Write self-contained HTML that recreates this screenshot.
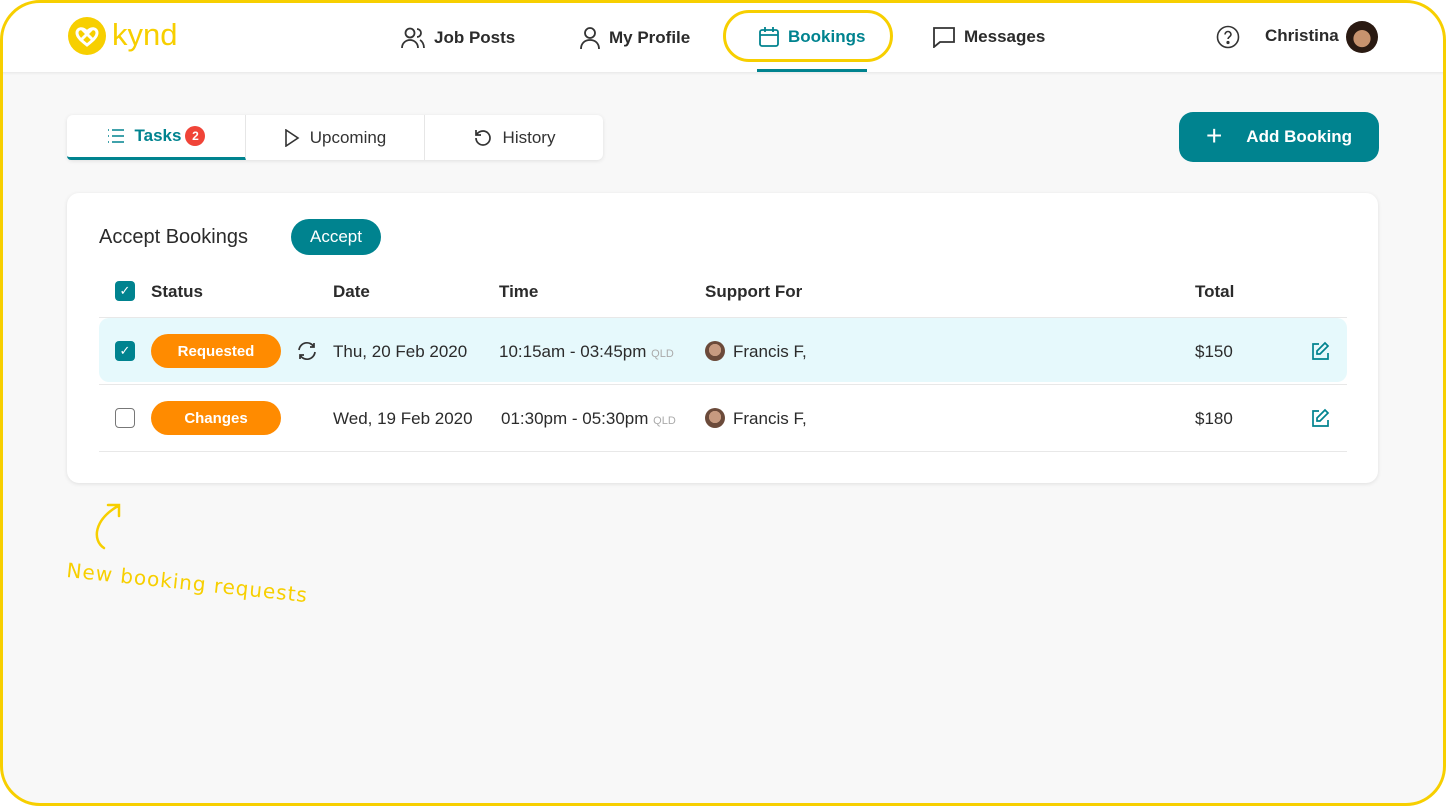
<!DOCTYPE html>
<html><head><meta charset="utf-8"><style>
*{box-sizing:border-box;margin:0;padding:0}
body{width:1446px;height:806px;overflow:hidden;background:#f8f8f8;font-family:"Liberation Sans",sans-serif;color:#2b2b2b;position:relative}
.frame{position:absolute;left:0;top:0;width:1446px;height:806px;border:3px solid #f7cf00;border-radius:40px;z-index:10;box-shadow:0 0 0 30px #fff}
.clip{position:absolute;left:0;top:0;width:1446px;height:806px;overflow:hidden}
.hdr{position:absolute;left:0;top:0;right:0;height:72px;background:#fff;box-shadow:0 1px 3px rgba(0,0,0,.08)}
.abs{position:absolute}
.nav{position:absolute;top:26px;font-size:17px;font-weight:bold;color:#2b2b2b;display:flex;align-items:center;gap:8px}
.tabs{position:absolute;left:67px;top:115px;width:536px;height:45px;background:#fff;border-radius:6px;box-shadow:0 1px 4px rgba(0,0,0,.1);display:flex}
.tab{flex:1;display:flex;align-items:center;justify-content:center;gap:10px;font-size:17px;color:#333;border-right:1px solid #e6e6e6}
.card{position:absolute;left:67px;top:193px;width:1311px;height:290px;background:#fff;border-radius:12px;box-shadow:0 1px 4px rgba(0,0,0,.1)}
.pill{position:absolute;width:130px;height:34px;border-radius:17px;background:#ff8b00;color:#fff;font-weight:bold;font-size:15px;display:flex;align-items:center;justify-content:center}
.cb{position:absolute;width:20px;height:20px;border-radius:4px}
.t{position:absolute;font-size:17px}
.th{position:absolute;font-size:17px;font-weight:bold;top:89px}
</style></head><body><div class="clip">
<div class="hdr">
 <svg class="abs" style="left:67px;top:16px" width="40" height="40" viewBox="0 0 40 40"><circle cx="20" cy="20" r="19" fill="#f7cf00"/><path d="M10 17c0-5 6-6 10-1 4-5 10-4 10 1 0 4-5 8-10 12-5-4-10-8-10-12zM13 25l12-12M15 13l12 12" stroke="#fff" stroke-width="3" fill="none"/></svg>
 <div class="abs" style="left:112px;top:17px;font-size:31px;color:#f7cf00;letter-spacing:0px">kynd</div>
 <div class="nav" style="left:400px"><svg width="26" height="24" viewBox="0 0 26 24" fill="none" stroke="#333" stroke-width="1.8"><circle cx="10" cy="7" r="4.5"/><path d="M2 22c0-5 4-8 8-8s8 3 8 8M17 3a4 4 0 010 8M20 14c2 1 4 4 4 8"/></svg>Job Posts</div>
 <div class="nav" style="left:579px"><svg width="22" height="24" viewBox="0 0 22 24" fill="none" stroke="#333" stroke-width="1.8"><circle cx="11" cy="7" r="5"/><path d="M2 23c0-6 4-9 9-9s9 3 9 9"/></svg>My Profile</div>
 <div class="abs" style="left:723px;top:10px;width:170px;height:52px;border:3px solid #f7cf00;border-radius:27px"></div>
 <div class="nav" style="left:758px;color:#00838f"><svg width="22" height="22" viewBox="0 0 22 22" fill="none" stroke="#00838f" stroke-width="1.8"><rect x="2" y="4" width="18" height="16" rx="2"/><path d="M2 9h18M7 1v5M15 1v5"/></svg>Bookings</div>
 <div class="abs" style="left:757px;top:69px;width:110px;height:3px;background:#00838f"></div>
 <div class="nav" style="left:932px"><svg width="24" height="22" viewBox="0 0 24 22" fill="none" stroke="#333" stroke-width="1.8"><path d="M2 2h20v14H8l-6 5z"/></svg>Messages</div>
 <svg class="abs" style="left:1216px;top:25px" width="24" height="24" viewBox="0 0 24 24" fill="none" stroke="#333" stroke-width="1.6"><circle cx="12" cy="12" r="10.5"/><path d="M9 9.5a3 3 0 116 0c0 2-3 2.5-3 4.5"/><circle cx="12" cy="17.5" r=".8" fill="#333"/></svg>
 <div class="nav" style="left:1265px">Christina</div>
 <div class="abs" style="left:1346px;top:21px;width:32px;height:32px;border-radius:50%;background:radial-gradient(circle at 50% 55%,#c8936e 0 35%,#2a1a12 37%)"></div>
</div>
<div class="tabs">
 <div class="tab" style="color:#00838f;font-weight:bold;border-bottom:3px solid #00838f;border-radius:0 0 0 4px"><svg width="18" height="14" viewBox="0 0 18 14" stroke="#00838f" stroke-width="1.6"><path d="M1 1h1M1 7h1M1 13h1M5 1h12M5 7h12M5 13h12"/></svg>Tasks <span style="margin-left:-6px;width:20px;height:20px;border-radius:50%;background:#f04438;color:#fff;font-size:12px;display:flex;align-items:center;justify-content:center">2</span></div>
 <div class="tab"><svg width="16" height="18" viewBox="0 0 16 18" fill="none" stroke="#333" stroke-width="1.6"><path d="M2 1l12 8-12 8z"/></svg>Upcoming</div>
 <div class="tab" style="border:none"><svg width="20" height="20" viewBox="0 0 20 20" fill="none" stroke="#333" stroke-width="1.7"><path d="M3 10a7 7 0 107-7c-3 0-5 1.5-6.5 3.5M3 2v5h5"/></svg>History</div>
</div>
<div class="abs" style="left:1179px;top:112px;width:200px;height:50px;border-radius:14px;background:#00838f;color:#fff;font-weight:bold;font-size:17px;display:flex;align-items:center;justify-content:center;gap:24px"><span style="font-size:28px;font-weight:normal;margin-top:-3px">+</span>Add Booking</div>
<div class="card">
 <div class="t" style="left:32px;top:33px;font-size:20px">Accept Bookings</div>
 <div class="abs" style="left:224px;top:26px;width:90px;height:36px;border-radius:18px;background:#00838f;color:#fff;font-size:17px;display:flex;align-items:center;justify-content:center">Accept</div>
 <div class="cb" style="left:48px;top:88px;background:#00838f;color:#fff;font-size:13px;text-align:center;line-height:20px">✓</div>
 <div class="th" style="left:84px">Status</div><div class="th" style="left:266px">Date</div><div class="th" style="left:432px">Time</div><div class="th" style="left:638px">Support For</div><div class="th" style="left:1128px">Total</div>
 <div class="abs" style="left:32px;top:124px;width:1248px;height:1px;background:#e8e8e8"></div>
 <div class="abs" style="left:32px;top:125px;width:1248px;height:64px;background:#e6f9fc;border-radius:10px"></div>
 <div class="abs" style="left:32px;top:191px;width:1248px;height:1px;background:#e8e8e8"></div>
 <div class="abs" style="left:32px;top:258px;width:1248px;height:1px;background:#e8e8e8"></div>
 <div class="cb" style="left:48px;top:148px;background:#00838f;color:#fff;font-size:13px;text-align:center;line-height:20px">✓</div>
 <div class="pill" style="left:84px;top:141px">Requested</div>
 <svg class="abs" style="left:229px;top:148px" width="22" height="20" viewBox="0 0 22 20" fill="none" stroke="#333" stroke-width="1.7"><path d="M3 9a8 8 0 0115-3M19 11a8 8 0 01-15 3M18 2v4h-4M4 18v-4h4"/></svg>
 <div class="t" style="left:266px;top:149px">Thu, 20 Feb 2020</div>
 <div class="t" style="left:432px;top:149px">10:15am - 03:45pm <span style="font-size:11px;color:#aaa">QLD</span></div>
 <div class="abs" style="left:638px;top:148px;width:20px;height:20px;border-radius:50%;background:radial-gradient(circle at 50% 45%,#c79a80 0 40%,#6b4a3a 42%)"></div>
 <div class="t" style="left:666px;top:149px">Francis F,</div>
 <div class="t" style="left:1128px;top:149px">$150</div>
 <svg class="abs" style="left:1243px;top:148px" width="20" height="20" viewBox="0 0 20 20" fill="none" stroke="#00838f" stroke-width="1.7"><path d="M9 3H3v15h15v-6M15 2l3 3-8 8H7v-3z"/></svg>
 <div class="cb" style="left:48px;top:215px;border:1.5px solid #777"></div>
 <div class="pill" style="left:84px;top:208px">Changes</div>
 <div class="t" style="left:266px;top:216px">Wed, 19 Feb 2020</div>
 <div class="t" style="left:434px;top:216px">01:30pm - 05:30pm <span style="font-size:11px;color:#aaa">QLD</span></div>
 <div class="abs" style="left:638px;top:215px;width:20px;height:20px;border-radius:50%;background:radial-gradient(circle at 50% 45%,#c79a80 0 40%,#6b4a3a 42%)"></div>
 <div class="t" style="left:666px;top:216px">Francis F,</div>
 <div class="t" style="left:1128px;top:216px">$180</div>
 <svg class="abs" style="left:1243px;top:215px" width="20" height="20" viewBox="0 0 20 20" fill="none" stroke="#00838f" stroke-width="1.7"><path d="M9 3H3v15h15v-6M15 2l3 3-8 8H7v-3z"/></svg>
</div>
<svg class="abs" style="left:88px;top:500px" width="40" height="52" viewBox="0 0 40 52" fill="none" stroke="#f7cf00" stroke-width="2.5" stroke-linecap="round"><path d="M16 48C4 40 6 20 30 6M20 5h11v11"/></svg>
<div class="abs" style="left:68px;top:558px;font-family:'DejaVu Sans',cursive;font-size:20px;letter-spacing:1px;color:#f7cf00;transform:rotate(6deg);transform-origin:left top">New booking requests</div>
</div><div class="frame"></div></body></html>
